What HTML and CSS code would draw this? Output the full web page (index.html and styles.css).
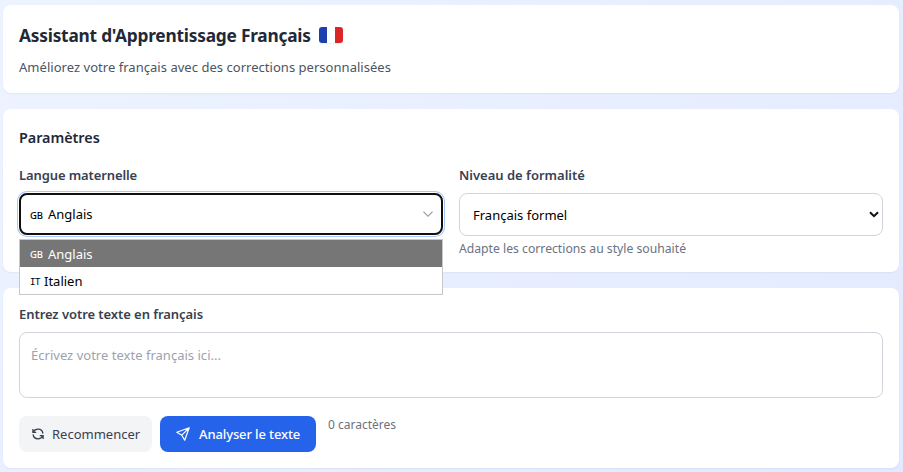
FILE: index.html
```
<!DOCTYPE html>
<html lang="fr">
<head>
<meta charset="utf-8">
<title>Assistant d'Apprentissage Français</title>
<link rel="stylesheet" href="styles.css">
</head>
<body>
<main class="page">
  <header class="card header">
    <h1 class="title"><span>Assistant d'Apprentissage Français</span>
      <svg class="flag" viewBox="0 0 24 16"><rect width="8" height="16" fill="#1e40af"/><rect x="8" width="8" height="16" fill="#fff"/><rect x="16" width="8" height="16" fill="#dc2626"/></svg>
    </h1>
    <p class="subtitle">Améliorez votre français avec des corrections personnalisées</p>
  </header>

  <section class="card settings">
    <h2 class="heading">Paramètres</h2>
    <div class="fields">
      <div class="field">
        <div class="label label-lang">Langue maternelle</div>
        <div class="picker">
          <div class="select select-open"><span class="code">GB</span><span class="lang">Anglais</span>
            <svg class="chevron-thin" viewBox="0 0 12 8"><path d="M1.500 1.800 6 6.200l4.500-4.400" fill="none" stroke="#9ca3af" stroke-width="1.200"/></svg>
          </div>
          <div class="menu">
            <div class="option option-active"><span class="code">GB</span><span class="lang">Anglais</span></div>
            <div class="option"><span class="code code-it">IT</span><span class="lang">Italien</span></div>
          </div>
        </div>
      </div>
      <div class="field">
        <div class="label">Niveau de formalité</div>
        <div class="select"><span>Français formel</span>
          <svg class="chevron-bold" viewBox="0 0 10 7"><path d="M1 1.200 5 5.200l4-4" fill="none" stroke="#111" stroke-width="2"/></svg>
        </div>
        <p class="help">Adapte les corrections au style souhaité</p>
      </div>
    </div>
  </section>

  <section class="card editor">
    <div class="label label-editor">Entrez votre texte en français</div>
    <div class="textbox">Écrivez votre texte français ici...</div>
    <div class="actions">
      <div class="button button-reset">
        <svg class="icon-reset" viewBox="0 0 12 12" fill="none" stroke="#374151" stroke-width="1.300"><path d="M.9 1v3.300h3.300M11.100 11V7.700H7.800M1.200 4.200C2.100 2.300 3.800 1.200 6 1.200c2.700 0 4.600 1.700 4.900 4.400M10.800 7.800C9.900 9.700 8.200 10.800 6 10.800 3.300 10.800 1.400 9.100 1.100 6.400"/></svg>
        <span>Recommencer</span>
      </div>
      <div class="button button-send">
        <svg class="icon-send" viewBox="0 0 14 14" fill="none" stroke="#fff" stroke-width="1.200" stroke-linejoin="round"><path d="M13.200.8.8 5.300l5 2.900 2.900 5zM13.200.8 5.800 8.200"/></svg>
        <span>Analyser le texte</span>
      </div>
      <span class="count">0 caractères</span>
    </div>
  </section>
</main>
</body>
</html>
```
FILE: styles.css
```
* { box-sizing: border-box; }
body {
  margin: 0;
  min-height: 472px;
  background: linear-gradient(135deg, #edf3ff, #e3eaff);
  font-family: "Noto Sans", "Open Sans", sans-serif;
  font-size: 13px;
  line-height: 20px;
  color: #1f2937;
}
h1, h2, p { margin: 0; }
.page { display: flex; flex-direction: column; gap: 16px; padding: 5px 4px 4px 3px; }
.card {
  padding: 16px;
  border-radius: 8px;
  background: #fff;
  box-shadow: 0 1px 2px rgba(0, 0, 0, .05);
}
.header { height: 88px; }
.title {
  display: flex;
  align-items: center;
  gap: 8px;
  height: 28px;
  font-size: 17.300px;
  font-weight: 700;
  line-height: 22px;
  letter-spacing: -.21px;
  white-space: nowrap;
}
.title span { padding-top: 2px; }
.flag { width: 24px; height: 16px; border-radius: 3px; box-shadow: 0 1px 1px rgba(0, 0, 0, .06); }
.subtitle { margin-top: 8px; color: #4b5563; letter-spacing: .033px; }
.settings { height: 163px; }
.heading { height: 24px; font-size: 14.400px; font-weight: 600; line-height: 26px; letter-spacing: -.05px; }
.fields { display: grid; grid-template-columns: 1fr 1fr; gap: 16px; margin-top: 16px; }
.label { margin-bottom: 8px; font-weight: 600; color: #374151; }
.label-lang { letter-spacing: -.11px; }
.label-editor { letter-spacing: -.063px; }
.picker { position: relative; }
.select {
  display: flex;
  align-items: center;
  height: 43px;
  padding: 0 3px 0 13px;
  border: 1px solid #d1d5db;
  border-radius: 8px;
  color: #000;
}
.select-open {
  height: 42px;
  padding: 0 7px 0 9px;
  border: 2px solid #101010;
  box-shadow: 0 0 0 1px #fff, 0 0 0 2px #a9c7fa;
}
.chevron-thin { width: 12px; height: 8px; margin-left: auto; }
.chevron-bold { width: 10px; height: 7px; margin-left: auto; }
.code { width: 18px; padding-top: 2px; font: 500 9.500px "Noto Sans", sans-serif; letter-spacing: -.1px; }
.code-it { width: 14px; font: 9px "DejaVu Sans Mono", monospace; letter-spacing: -.3px; }
.menu {
  position: absolute;
  top: 46px;
  left: 0;
  right: 0;
  border: 1px solid #c8c8c8;
  background: #fff;
  color: #000;
}
.option { display: flex; align-items: center; height: 27px; padding-left: 10px; }
.option-active { background: #767676; color: #fff; }
.help { margin-top: 5px; font-size: 12.200px; line-height: 16px; color: #6b7280; }
.editor { height: 180px; }
.textbox {
  height: 66px;
  padding: 12px 11px;
  border: 1px solid #d1d5db;
  border-radius: 8px;
  color: #9ca3af;
  letter-spacing: .02px;
}
.actions { display: flex; margin-top: 18px; }
.button { display: flex; align-items: center; height: 36px; border-radius: 8px; white-space: nowrap; }
.button-reset { width: 133px; gap: 8px; padding-left: 13px; background: #f3f4f6; color: #374151; }
.button-send { width: 156px; gap: 9px; margin-left: 8px; padding-left: 16px; background: #2563eb; color: #fff; font-weight: 500; letter-spacing: -.12px; }
.icon-reset { width: 12px; height: 12px; }
.icon-send { width: 14px; height: 14px; }
.count { margin: 1px 0 0 12px; font-size: 12px; line-height: 16px; color: #6b7280; }
```
